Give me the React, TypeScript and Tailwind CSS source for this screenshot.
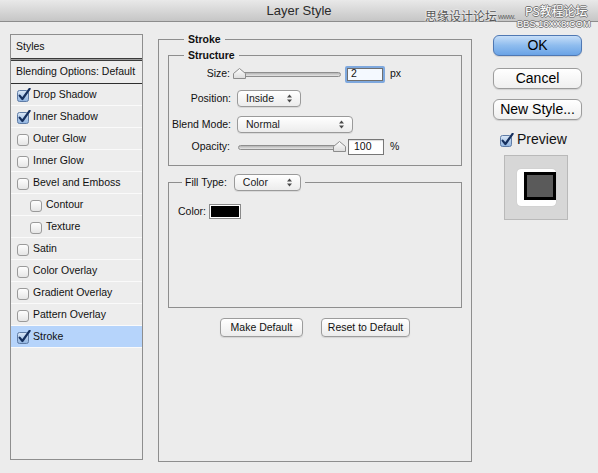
import React from "react";

const font = "font-['Liberation_Sans',Arial,sans-serif]";

type Row = { label: string; checked?: boolean; indent?: boolean; active?: boolean };

const rows: Row[] = [
  { label: "Drop Shadow", checked: true },
  { label: "Inner Shadow", checked: true },
  { label: "Outer Glow" },
  { label: "Inner Glow" },
  { label: "Bevel and Emboss" },
  { label: "Contour", indent: true },
  { label: "Texture", indent: true },
  { label: "Satin" },
  { label: "Color Overlay" },
  { label: "Gradient Overlay" },
  { label: "Pattern Overlay" },
  { label: "Stroke", checked: true, active: true },
];

const CheckBox = ({ checked }: { checked?: boolean }) =>
  checked ? (
    <svg width="14" height="14" viewBox="0 0 14 14" className="shrink-0">
      <defs>
        <linearGradient id="cb" x1="0" y1="0" x2="0" y2="1">
          <stop offset="0" stopColor="#dbe8f7" />
          <stop offset="1" stopColor="#8fb3e0" />
        </linearGradient>
      </defs>
      <rect x="0.5" y="2.5" width="11" height="11" rx="2" fill="url(#cb)" stroke="#5f7ca6" />
      <path d="M2.6 7.6 L5.4 11 L12.6 0.8" fill="none" stroke="#16305e" strokeWidth="2.2" strokeLinecap="round" strokeLinejoin="round" />
    </svg>
  ) : (
    <svg width="14" height="14" viewBox="0 0 14 14" className="shrink-0">
      <defs>
        <linearGradient id="cbu" x1="0" y1="0" x2="0" y2="1">
          <stop offset="0" stopColor="#ffffff" />
          <stop offset="1" stopColor="#e4e4e4" />
        </linearGradient>
      </defs>
      <rect x="0.5" y="2.5" width="11" height="11" rx="2.5" fill="url(#cbu)" stroke="#9a9a9a" />
    </svg>
  );

const Arrows = () => (
  <svg width="7" height="9" viewBox="0 0 7 9" className="shrink-0">
    <path d="M3.5 0.5 L6 3.5 L1 3.5 Z" fill="#4a4a4a" />
    <path d="M3.5 8.5 L6 5.5 L1 5.5 Z" fill="#4a4a4a" />
  </svg>
);

const Select = ({ value, width }: { value: string; width: string }) => (
  <div
    className={`${width} h-[17px] flex items-center justify-between pl-[8px] pr-[7px] rounded-[4px] border border-[#9a9a9a] bg-gradient-to-b from-white to-[#ececec] shadow-[0_1px_0_rgba(0,0,0,0.08)] text-[10.5px] text-[#1a1a1a]`}
  >
    <span>{value}</span>
    <Arrows />
  </div>
);

const Thumb = () => (
  <svg width="13" height="11" viewBox="0 0 13 11">
    <defs>
      <linearGradient id="th" x1="0" y1="0" x2="0" y2="1">
        <stop offset="0" stopColor="#ffffff" />
        <stop offset="1" stopColor="#dcdcdc" />
      </linearGradient>
    </defs>
    <path d="M0.5 10.5 L0.5 5.5 L6.5 0.5 L12.5 5.5 L12.5 10.5 Z" fill="url(#th)" stroke="#8c8c8c" />
  </svg>
);

const Slider = ({ width, right }: { width: string; right?: boolean }) => (
  <div className={`${width} h-[12px] flex items-center ${right ? "justify-end" : "justify-start"} relative`}>
    <div className="absolute left-0 right-0 top-[4px] h-[5px] rounded-full border border-[#8e8e8e] bg-gradient-to-b from-[#b4b4b4] to-[#e6e6e6]" />
    <div className={`relative mt-[-2px] ${right ? "mr-[-2px]" : "ml-[-1px]"}`}>
      <Thumb />
    </div>
  </div>
);

const MacButton = ({ children, w, primary }: { children: React.ReactNode; w: string; primary?: boolean }) => (
  <div
    className={`${w} h-[21px] flex items-center justify-center rounded-[6px] border text-[14px] text-black ${
      primary
        ? "border-[#4f78b3] bg-gradient-to-b from-[#c6def8] via-[#8ebcee] to-[#6aa3e6]"
        : "border-[#9c9c9c] bg-gradient-to-b from-white to-[#efefef]"
    } shadow-[0_1px_1px_rgba(0,0,0,0.12)]`}
  >
    {children}
  </div>
);

const SmallButton = ({ children, w }: { children: React.ReactNode; w: string }) => (
  <div
    className={`${w} h-[19px] flex items-center justify-center rounded-[4px] border border-[#9c9c9c] bg-gradient-to-b from-white to-[#ececec] text-[10.5px] text-[#111] shadow-[0_1px_1px_rgba(0,0,0,0.1)]`}
  >
    {children}
  </div>
);

export default function App() {
  return (
    <div className={`${font} w-[598px] h-[473px] bg-[#ececec] relative overflow-hidden text-[#111]`}>
      {/* title bar */}
      <div className="h-[22px] border-b border-[#8d8d8d] bg-gradient-to-b from-[#e9e9e9] to-[#c6c6c6] flex items-center justify-center text-[13px] text-[#2a2a2a]">
        Layer Style
      </div>

      {/* watermark */}
      <div className="absolute left-[425px] top-[4px] w-[172px] h-[26px] pointer-events-none">
        <div className="absolute left-0 top-[6px] text-[12px] leading-none text-[#555] font-['Noto_Sans_CJK_SC',sans-serif] [text-shadow:0_0_2px_#fff,0_0_2px_#fff]">
          思缘设计论坛
        </div>
        <div className="absolute left-[73px] top-[9px] text-[8px] leading-none text-[#666] tracking-[-0.5px]">
          www.
        </div>
        <div className="absolute left-[100px] top-[1px] text-[12px] leading-none text-white font-['Noto_Sans_CJK_SC',sans-serif] [text-shadow:1px_0_0_#777,-1px_0_0_#777,0_1px_0_#777,0_-1px_0_#777]">
          PS教程论坛
        </div>
        <div className="absolute left-[92px] top-[16px] text-[9px] leading-none text-white tracking-[0.2px] [text-shadow:1px_0_0_#777,-1px_0_0_#777,0_1px_0_#777,0_-1px_0_#777]">
          BBS.16XX8.COM
        </div>
      </div>

      <div className="flex items-start pl-[10px] pt-[12px]">
        {/* styles list */}
        <div className="w-[133px] h-[426px] border border-[#8e8e8e] bg-[#ededed] flex flex-col">
          <div className="h-[23px] flex items-center pl-[5px] text-[10.5px]">Styles</div>
          <div className="h-[3px] border-t border-b border-[#3a3a3a] bg-[#9a9a9a]" />
          <div className="h-[22px] flex items-center pl-[5px] text-[10.5px]">Blending Options: Default</div>
          <div className="h-px bg-[#2e2e2e]" />
          {rows.map((r) => (
            <div
              key={r.label}
              className={`h-[22px] flex items-center gap-[1px] border-b border-[#fafafa] text-[10.5px] ${
                r.indent ? "pl-[19px]" : "pl-[6px]"
              } ${r.active ? "bg-[#b6d4fb]" : ""}`}
            >
              <CheckBox checked={r.checked} />
              <span className="ml-[1px]">{r.label}</span>
            </div>
          ))}
        </div>

        {/* stroke group */}
        <fieldset className="ml-[15px] mt-[-1px] w-[314px] h-[429px] border border-[#8e8e8e] px-[9px]">
          <legend className="ml-[16px] px-[4px] text-[10.5px] font-bold leading-[12px]">Stroke</legend>

          <fieldset className="mt-[4px] h-[117px] border border-[#8e8e8e]">
            <legend className="ml-[15px] px-[4px] text-[10.5px] font-bold leading-[12px]">Structure</legend>
            <div className="flex flex-col pt-[5px] text-[10.5px]">
              <div className="h-[16px] flex items-center">
                <span className="w-[61px] text-right">Size:</span>
                <div className="ml-[4px]">
                  <Slider width="w-[107px]" />
                </div>
                <div className="ml-[4px] w-[40px] h-[17px] rounded-[2px] border-[2px] border-[#7ea8de] bg-white flex items-center">
                  <div className="w-full h-full border border-[#6f6f6f] bg-[#f4f9ff] flex items-center pl-[3px] text-[10.5px]">2</div>
                </div>
                <span className="ml-[5px]">px</span>
              </div>

              <div className="h-[17px] mt-[8px] flex items-center">
                <span className="w-[62px] text-right">Position:</span>
                <div className="ml-[6px]">
                  <Select value="Inside" width="w-[64px]" />
                </div>
              </div>

              <div className="h-[17px] mt-[9px] flex items-center">
                <span className="w-[62px] text-right">Blend Mode:</span>
                <div className="ml-[6px]">
                  <Select value="Normal" width="w-[116px]" />
                </div>
              </div>

              <div className="h-[16px] mt-[6px] flex items-center">
                <span className="w-[61px] text-right">Opacity:</span>
                <div className="ml-[8px]">
                  <Slider width="w-[106px]" right />
                </div>
                <div className="ml-[4px] w-[36px] h-[16px] border border-[#777] bg-white flex items-center pl-[5px] shadow-[inset_0_1px_1px_rgba(0,0,0,0.15)]">
                  100
                </div>
                <span className="ml-[6px]">%</span>
              </div>
            </div>
          </fieldset>

          <fieldset className="mt-[8px] h-[134px] border border-[#8e8e8e] pl-[9px]">
            <legend className="ml-[4px] pl-[3px] pr-[4px] flex items-center text-[10.5px]">
              <span>Fill Type:</span>
              <div className="ml-[7px]">
                <Select value="Color" width="w-[67px]" />
              </div>
            </legend>
            <div className="pt-[13px] flex items-center text-[10.5px]">
              <span>Color:</span>
              <div className="ml-[3px] w-[32px] h-[15px] border border-[#8a8a8a] p-px bg-white">
                <div className="w-full h-full bg-black" />
              </div>
            </div>
          </fieldset>

          <div className="mt-[10px] flex justify-center gap-[18px]">
            <SmallButton w="w-[83px]">Make Default</SmallButton>
            <SmallButton w="w-[89px]">Reset to Default</SmallButton>
          </div>
        </fieldset>

        {/* right column */}
        <div className="ml-[21px] mt-[1px] flex flex-col">
          <MacButton w="w-[89px]" primary>OK</MacButton>
          <div className="mt-[12px]">
            <MacButton w="w-[89px]">Cancel</MacButton>
          </div>
          <div className="mt-[10px]">
            <MacButton w="w-[89px]">New Style...</MacButton>
          </div>
          <div className="mt-[9px] ml-[7px] flex items-center gap-[3px] text-[14px]">
            <CheckBox checked />
            <span>Preview</span>
          </div>
          <div className="mt-[5px] ml-[11px] w-[64px] h-[65px] border border-[#b9b9b9] bg-[#d7d7d7] flex items-center justify-center">
            <div className="w-[39px] h-[37px] rounded-[4px] bg-white flex items-start justify-end pt-[3px] shadow-[0_0_1px_rgba(0,0,0,0.2)]">
              <div className="w-[32px] h-[28px] border-[3px] border-black bg-[#5a5a5a]" />
            </div>
          </div>
        </div>
      </div>
    </div>
  );
}
